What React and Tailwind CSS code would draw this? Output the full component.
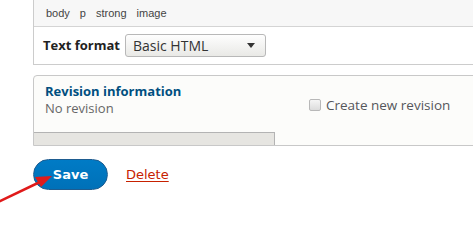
export default function App() {
  return (
    <div className="relative w-[473px] h-[205px] overflow-hidden bg-white font-['Open_Sans',sans-serif]">
      {/* editor footer: element path + text format */}
      <div className="ml-[33px] w-[460px] border border-t-0 border-[#cccccc]">
        <div className="h-[27px] bg-[#f7f7f7] border-b border-[#d4d4d4] pl-[12px] flex items-center gap-[10px] text-[11px] text-[#444] font-['Liberation_Sans',sans-serif]">
          <span>body</span>
          <span>p</span>
          <span>strong</span>
          <span>image</span>
        </div>
        <div className="h-[37px] flex items-center pl-[9px] gap-[5px]">
          <span className="text-[13px] font-bold text-[#222]">Text format</span>
          <div className="w-[141px] h-[23px] rounded-[3px] border border-[#b8b8b8] bg-gradient-to-b from-[#fefefe] to-[#e9e9e6] flex items-center justify-between pl-[7px] pr-[10px]">
            <span className="text-[14px] text-[#333]">Basic HTML</span>
            <span className="w-0 h-0 border-l-[4px] border-r-[4px] border-t-[5px] border-l-transparent border-r-transparent border-t-[#333]" />
          </div>
        </div>
      </div>

      {/* revision information vertical tabs */}
      <div className="ml-[33px] mt-[10px] w-[460px] h-[71px] border border-[#c8c8c8] rounded-tl-[4px] bg-[#fcfcfa] flex overflow-hidden">
        <div className="w-[241px] flex flex-col">
          <div className="flex-1 pl-[11px] pt-[6px]">
            <div className="text-[13px] font-bold text-[#004f80] leading-[18px]">Revision information</div>
            <div className="text-[13px] text-[#666] leading-[16px]">No revision</div>
          </div>
          <div className="h-[13px] bg-[#e6e5e1] border-t border-r border-[#b3b3b3]" />
        </div>
        <div className="flex-1 pl-[34px] pt-[19px]">
          <label className="flex items-center gap-[5px] text-[13.5px] text-[#55565b]">
            <span className="w-[12px] h-[12px] rounded-[2px] border border-[#b8b8b8] bg-gradient-to-b from-[#f5f5f5] to-[#dcdcdc]" />
            Create new revision
          </label>
        </div>
      </div>

      {/* actions */}
      <div className="ml-[33px] mt-[13px] flex items-center gap-[18px]">
        <button className="w-[75px] h-[31px] rounded-full bg-gradient-to-b from-[#007bc6] to-[#0071b8] border border-[#1e5c90] text-white text-[13px] font-bold font-['DejaVu_Sans',sans-serif]">
          Save
        </button>
        <a className="text-[13px] text-[#c72100] underline underline-offset-2 font-['DejaVu_Sans',sans-serif]">
          Delete
        </a>
      </div>

      {/* red annotation arrow */}
      <svg className="absolute left-0 top-[168px]" width="60" height="37" viewBox="0 0 60 37">
        <line x1="-2" y1="34" x2="42" y2="13" stroke="#e01a1a" strokeWidth="2.5" />
        <polygon points="52,8 35,9 41,19" fill="#e01a1a" />
      </svg>
    </div>
  );
}
